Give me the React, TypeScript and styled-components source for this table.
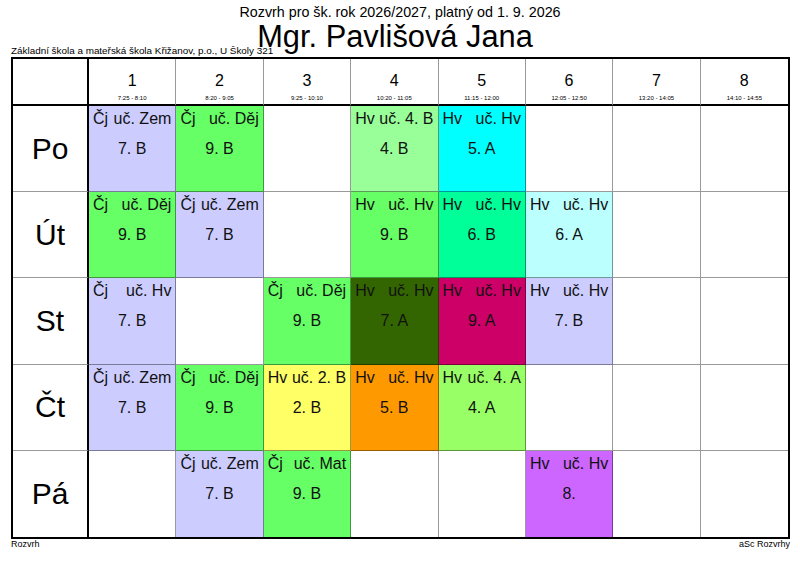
import styled, { createGlobalStyle } from 'styled-components';

const GlobalStyle = createGlobalStyle`
  body {
    margin: 0;
    background: #ffffff;
    font-family: "Liberation Sans", Arial, sans-serif;
    color: #000000;
  }
`;

interface Lesson {
  subject: string;
  room: string;
  group: string;
}

const classColors: Record<string, string> = {
  '7. B': '#ccccff',
  '9. B': '#66ff66',
  '4. B': '#99ff99',
  '5. A': '#00ffff',
  '6. B': '#00ff99',
  '6. A': '#bbffff',
  '7. A': '#336600',
  '9. A': '#cc0066',
  '2. B': '#ffff66',
  '5. B': '#ff9900',
  '4. A': '#99ff66',
  '8.': '#cc66ff',
};

const periods = [
  { num: 1, time: '7:25 - 8:10' },
  { num: 2, time: '8:20 - 9:05' },
  { num: 3, time: '9:25 - 10:10' },
  { num: 4, time: '10:20 - 11:05' },
  { num: 5, time: '11:15 - 12:00' },
  { num: 6, time: '12:05 - 12:50' },
  { num: 7, time: '13:20 - 14:05' },
  { num: 8, time: '14:10 - 14:55' },
];

const L = (subject: string, room: string, group: string): Lesson => ({ subject, room, group });

const days: { label: string; lessons: (Lesson | null)[] }[] = [
  {
    label: 'Po',
    lessons: [L('Čj', 'uč. Zem', '7. B'), L('Čj', 'uč. Děj', '9. B'), null, L('Hv', 'uč. 4. B', '4. B'), L('Hv', 'uč. Hv', '5. A'), null, null, null],
  },
  {
    label: 'Út',
    lessons: [L('Čj', 'uč. Děj', '9. B'), L('Čj', 'uč. Zem', '7. B'), null, L('Hv', 'uč. Hv', '9. B'), L('Hv', 'uč. Hv', '6. B'), L('Hv', 'uč. Hv', '6. A'), null, null],
  },
  {
    label: 'St',
    lessons: [L('Čj', 'uč. Hv', '7. B'), null, L('Čj', 'uč. Děj', '9. B'), L('Hv', 'uč. Hv', '7. A'), L('Hv', 'uč. Hv', '9. A'), L('Hv', 'uč. Hv', '7. B'), null, null],
  },
  {
    label: 'Čt',
    lessons: [L('Čj', 'uč. Zem', '7. B'), L('Čj', 'uč. Děj', '9. B'), L('Hv', 'uč. 2. B', '2. B'), L('Hv', 'uč. Hv', '5. B'), L('Hv', 'uč. 4. A', '4. A'), null, null, null],
  },
  {
    label: 'Pá',
    lessons: [null, L('Čj', 'uč. Zem', '7. B'), L('Čj', 'uč. Mat', '9. B'), null, null, L('Hv', 'uč. Hv', '8.'), null, null],
  },
];

export default function App() {
  return (
    <>
      <GlobalStyle />
      <Page>
        <Title>Rozvrh pro šk. rok 2026/2027, platný od 1. 9. 2026</Title>
        <HeadRow>
          <Name>Mgr. Pavlišová Jana</Name>
          <School>Základní škola a mateřská škola Křižanov, p.o., U Školy 321</School>
        </HeadRow>
        <Table>
          <Corner />
          {periods.map((p, i) => (
            <PeriodHead key={p.num} $last={i === periods.length - 1}>
              <PeriodNum>{p.num}</PeriodNum>
              <PeriodTime>{p.time}</PeriodTime>
            </PeriodHead>
          ))}
          {days.map((d, di) => {
            const lastRow = di === days.length - 1;
            return (
              <Row key={d.label}>
                <DayCell $lastRow={lastRow}>{d.label}</DayCell>
                {d.lessons.map((l, li) => (
                  <Cell
                    key={li}
                    $bg={l ? classColors[l.group] : undefined}
                    $lastRow={lastRow}
                    $lastCol={li === d.lessons.length - 1}
                  >
                    {l && (
                      <>
                        <TopLine>
                          <span>{l.subject}</span>
                          <span>{l.room}</span>
                        </TopLine>
                        <Group>{l.group}</Group>
                      </>
                    )}
                  </Cell>
                ))}
              </Row>
            );
          })}
        </Table>
        <Footer>
          <span>Rozvrh</span>
          <span>aSc Rozvrhy</span>
        </Footer>
      </Page>
    </>
  );
}

const Page = styled.div`
  width: 800px;
  height: 566px;
  padding: 3px 11px 0 11px;
  box-sizing: border-box;
`;

const Title = styled.div`
  text-align: center;
  font-size: 14.3px;
  line-height: 18px;
`;

const HeadRow = styled.div`
  display: grid;
  height: 36px;
`;

const Name = styled.div`
  grid-area: 1 / 1;
  justify-self: center;
  font-size: 30.8px;
  line-height: 32px;
  margin-right: 10px;
`;

const School = styled.div`
  grid-area: 1 / 1;
  justify-self: start;
  align-self: end;
  font-size: 9.9px;
  line-height: 11px;
  margin-bottom: 1px;
`;

const Table = styled.div`
  display: grid;
  grid-template-columns: 76px repeat(8, 1fr);
  grid-template-rows: 47px repeat(5, 1fr);
  width: 779px;
  height: 482px;
  box-sizing: border-box;
  border: 2px solid #000;
`;

const Row = styled.div`
  display: contents;
`;

const Corner = styled.div`
  border-right: 2px solid #000;
  border-bottom: 2px solid #000;
`;

const PeriodHead = styled.div<{ $last: boolean }>`
  display: flex;
  flex-direction: column;
  align-items: center;
  border-bottom: 2px solid #000;
  border-right: ${(p) => (p.$last ? 'none' : '1px solid rgba(0, 0, 0, 0.4)')};
`;

const PeriodNum = styled.div`
  font-size: 16px;
  line-height: 18px;
  margin-top: 13px;
`;

const PeriodTime = styled.div`
  font-size: 6px;
  line-height: 8px;
  margin-top: 4px;
`;

const DayCell = styled.div<{ $lastRow: boolean }>`
  display: flex;
  align-items: center;
  justify-content: center;
  font-size: 30px;
  border-right: 2px solid #000;
  border-bottom: ${(p) => (p.$lastRow ? 'none' : '1px solid rgba(0, 0, 0, 0.4)')};
`;

const Cell = styled.div<{ $bg?: string; $lastRow: boolean; $lastCol: boolean }>`
  background: ${(p) => p.$bg ?? 'transparent'};
  border-right: ${(p) => (p.$lastCol ? 'none' : '1px solid rgba(0, 0, 0, 0.4)')};
  border-bottom: ${(p) => (p.$lastRow ? 'none' : '1px solid rgba(0, 0, 0, 0.4)')};
  color: #111;
  font-size: 16px;
  overflow: hidden;
`;

const TopLine = styled.div`
  display: flex;
  justify-content: space-between;
  padding: 3px 4px 0 4px;
  line-height: 20px;
  white-space: nowrap;
`;

const Group = styled.div`
  text-align: center;
  line-height: 20px;
  margin-top: 10px;
`;

const Footer = styled.div`
  display: flex;
  justify-content: space-between;
  width: 779px;
  font-size: 9px;
  line-height: 10px;
`;
